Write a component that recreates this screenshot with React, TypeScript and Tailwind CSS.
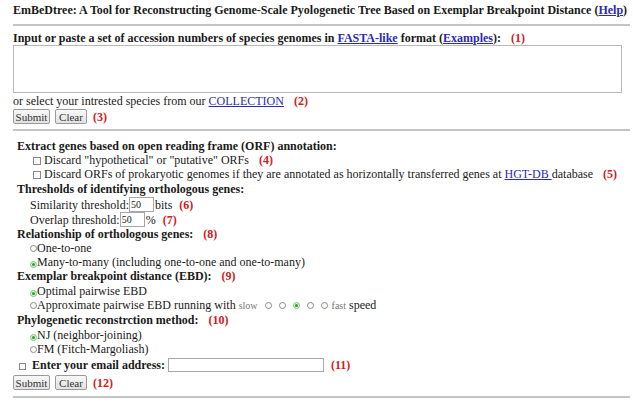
import React from "react";

const Num = ({ n }: { n: string }) => (
  <span className="ml-[7px] font-bold text-[#cc2020]">({n})</span>
);

const A = ({ children }: { children: React.ReactNode }) => (
  <a href="#" className="text-[#2a2ab8] underline">
    {children}
  </a>
);

const Check = () => (
  <span className="inline-block w-[8px] h-[8px] border border-[#8a8a8a] bg-[#fafafa] mr-[3px] align-[-1px]" />
);

const Radio = ({ on = false }: { on?: boolean }) => (
  <span
    className={
      "inline-flex items-center justify-center w-[7px] h-[7px] rounded-full border align-[0px] " +
      (on ? "border-[#7cc47c] bg-[#dff3df]" : "border-[#8a8a8a] bg-white")
    }
  >
    {on && <span className="block w-[3px] h-[3px] rounded-full bg-[#2f9a2f]" />}
  </span>
);

const Btn = ({ label, w }: { label: string; w: string }) => (
  <span
    className={
      "inline-flex items-center justify-center h-[15px] border border-[#9a9a9a] rounded-[2px] bg-gradient-to-b from-[#f8f8f8] to-[#e2e2e2] text-[11px] text-[#333] " +
      w
    }
  >
    {label}
  </span>
);

const Rule = () => <div className="h-[2px] bg-[#c4c4c4] w-[617px]" />;

export default function App() {
  return (
    <div
      className="w-[633px] h-[409px] overflow-hidden bg-white text-[12px] leading-[14px] text-[#1a1a1a] pl-[13px]"
      style={{ fontFamily: '"Liberation Serif", "Times New Roman", serif' }}
    >
      <div className="h-[3px]" />
      <div className="h-[14px] font-bold whitespace-nowrap">
        EmBeDtree: A Tool for Reconstructing Genome-Scale Pyologenetic Tree Based on Exemplar Breakpoint Distance (<A>Help</A>)
      </div>
      <div className="h-[7px]" />
      <Rule />
      <div className="h-[5px]" />
      <div className="h-[14px] font-bold whitespace-nowrap">
        Input or paste a set of accession numbers of species genomes in <A>FASTA-like</A> format (<A>Examples</A>): <Num n="1" />
      </div>
      <div className="w-[609px] h-[48px] border border-[#b8b8b8] bg-white" />
      <div className="h-[14px] mt-[1px] whitespace-nowrap">
        or select your intrested species from our <A>COLLECTION</A> <Num n="2" />
      </div>
      <div className="h-[15px] mt-[1px] flex items-center gap-[5px]">
        <Btn label="Submit" w="w-[37px]" />
        <Btn label="Clear" w="w-[32px]" />
        <span className="ml-[1px] font-bold text-[#cc2020]">(3)</span>
      </div>
      <div className="h-[5px]" />
      <Rule />

      <div className="pl-[4px] whitespace-nowrap">
        <div className="h-[8px]" />
        <div className="h-[14px] font-bold">Extract genes based on open reading frame (ORF) annotation:</div>
        <div className="h-[14px] pl-[16px]">
          <Check />Discard "hypothetical" or "putative" ORFs <Num n="4" />
        </div>
        <div className="h-[15px] pl-[16px]">
          <Check />Discard ORFs of prokaryotic genomes if they are annotated as horizontally transferred genes at <A>HGT-DB </A> database <Num n="5" />
        </div>
        <div className="h-[15px] font-bold">Thresholds of identifying orthologous genes:</div>
        <div className="h-[15px] pl-[13px] flex items-center">
          Similarity threshold:
          <span className="inline-flex items-center w-[25px] h-[15px] border border-[#a8a8a8] text-[10px] pl-[1px]">50</span>
          <span className="ml-[1px]">bits</span>
          <Num n="6" />
        </div>
        <div className="h-[15px] pl-[13px] flex items-center">
          Overlap threshold:
          <span className="inline-flex items-center w-[25px] h-[15px] border border-[#a8a8a8] text-[10px] pl-[1px]">50</span>
          <span className="ml-[1px]">%</span>
          <Num n="7" />
        </div>
        <div className="h-[14px] font-bold">
          Relationship of orthologous genes: <Num n="8" />
        </div>
        <div className="h-[14px] pl-[13px]">
          <Radio />One-to-one
        </div>
        <div className="h-[14px] pl-[13px]">
          <Radio on />Many-to-many (including one-to-one and one-to-many)
        </div>
        <div className="h-[15px] font-bold">
          Exemplar breakpoint distance (EBD): <Num n="9" />
        </div>
        <div className="h-[14px] pl-[13px]">
          <Radio on />Optimal pairwise EBD
        </div>
        <div className="h-[15px] pl-[13px]">
          <Radio />Approximate pairwise EBD running with{" "}
          <span className="text-[10px] text-[#777]">slow</span>
          <span className="inline-flex items-center gap-[7px] ml-[7px] mr-[4px]">
            <Radio />
            <Radio />
            <Radio on />
            <Radio />
            <Radio />
          </span>
          <span className="text-[10px] text-[#777]">fast</span> speed
        </div>
        <div className="h-[15px] font-bold">
          Phylogenetic reconstrction method: <Num n="10" />
        </div>
        <div className="h-[14px] pl-[13px]">
          <Radio on />NJ (neighbor-joining)
        </div>
        <div className="h-[15px] pl-[13px]">
          <Radio />FM (Fitch-Margoliash)
        </div>
        <div className="h-[15px] flex items-center font-bold">
          <span className="inline-block w-[7px] h-[7px] border border-[#8a8a8a] bg-[#fafafa] ml-[2px] mr-[6px] mt-[3px]" />
          Enter your email address:
          <span className="inline-block w-[156px] h-[14px] border border-[#a8a8a8] ml-[3px]" />
          <Num n="11" />
        </div>
      </div>
      <div className="h-[15px] mt-[3px] flex items-center gap-[5px]">
        <Btn label="Submit" w="w-[37px]" />
        <Btn label="Clear" w="w-[32px]" />
        <span className="ml-[1px] font-bold text-[#cc2020]">(12)</span>
      </div>
      <div className="h-[6px]" />
      <Rule />
    </div>
  );
}
